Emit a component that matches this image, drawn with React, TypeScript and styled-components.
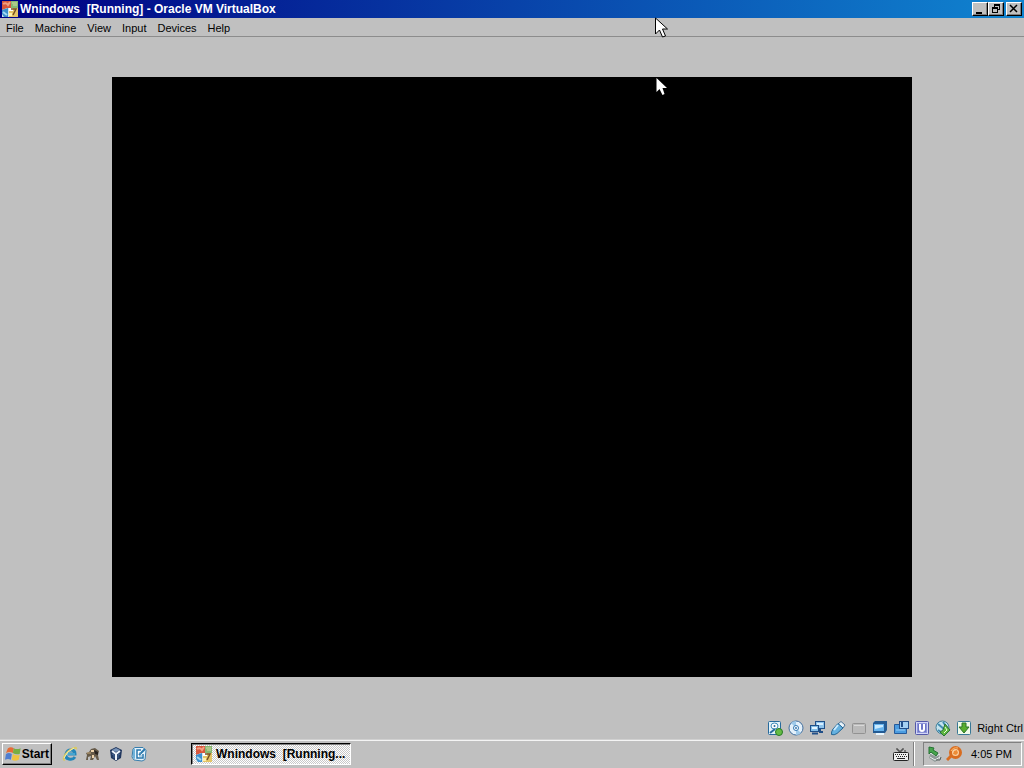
import React from "react";
import styled, { createGlobalStyle, css } from "styled-components";

const GlobalStyle = createGlobalStyle`
  * { box-sizing: border-box; }
  body { margin: 0; background: #c0c0c0; }
  button { font: inherit; color: inherit; border-radius: 0; margin: 0; }
`;

const raised = css`
  border: 1px solid;
  border-color: #fff #000 #000 #fff;
  box-shadow: inset -1px -1px 0 #808080;
  background: #c0c0c0;
`;

const Desktop = styled.div`
  display: flex;
  flex-direction: column;
  min-height: 100vh;
  position: relative;
  font-family: "Liberation Sans", Arial, sans-serif;
  font-size: 11px;
  line-height: 14px;
  color: #000;
  background: #c0c0c0;
`;

const TitleBar = styled.header`
  display: flex;
  align-items: center;
  height: 18px;
  padding: 0 2px;
  gap: 2px;
  background: linear-gradient(90deg, #000082, #1084d0);
`;

const Title = styled.h1`
  flex: 1;
  margin: 0;
  font-size: 12px;
  line-height: 16px;
  font-weight: bold;
  color: #fff;
  white-space: pre;
`;

const WindowControls = styled.div`
  display: flex;
`;

const ControlButton = styled.button<{ $spaced?: boolean }>`
  ${raised}
  display: flex;
  align-items: center;
  justify-content: center;
  width: 16px;
  height: 14px;
  padding: 0;
  margin-left: ${(p) => (p.$spaced ? "2px" : "0")};
`;

const MenuBar = styled.nav`
  display: flex;
  align-items: center;
  height: 19px;
  border-bottom: 1px solid #8c8c8c;
`;

const MenuItem = styled.button`
  border: 0;
  padding: 1px 5px 0 6px;
  line-height: 18px;
  background: none;
`;

const Workspace = styled.main`
  flex: 1;
  display: flex;
  padding: 40px 112px 39px;
`;

const GuestDisplay = styled.section`
  position: relative;
  flex: 1;
  background: #000;
`;

const Pointer = styled.svg<{ $left: string; $top: string }>`
  position: absolute;
  left: ${(p) => p.$left};
  top: ${(p) => p.$top};
`;

const StatusBar = styled.footer`
  display: flex;
  align-items: center;
  justify-content: flex-end;
  gap: 5px;
  height: 24px;
  padding-right: 1px;
`;

const Taskbar = styled.footer`
  display: flex;
  align-items: center;
  height: 28px;
  padding: 0 2px 2px;
  border-top: 1px solid #f4f4f4;
  box-shadow: 0 -1px 0 #d0d0d0;
`;

const StartButton = styled.button`
  ${raised}
  display: flex;
  align-items: center;
  gap: 1px;
  width: 50px;
  height: 22px;
  padding: 0 2px;
  font-size: 12px;
  font-weight: bold;
`;

const QuickLaunch = styled.div`
  display: flex;
  gap: 7px;
  margin-left: 10px;
  width: 129px;
`;

const IconButton = styled.button`
  display: flex;
  border: 0;
  padding: 0;
  background: none;
`;

const TaskButton = styled.button`
  display: flex;
  align-items: center;
  gap: 4px;
  width: 160px;
  height: 22px;
  padding: 1px 4px 0;
  border: 1px solid;
  border-color: #000 #fff #fff #000;
  box-shadow: inset 1px 1px 0 #808080;
  background: repeating-conic-gradient(#fff 0 25%, #c8c8c8 0 50%) 0 0 / 2px 2px;
  font-size: 12px;
  font-weight: bold;
  white-space: pre;
`;

const TrayGroup = styled.div`
  display: flex;
  align-items: center;
  margin-left: auto;
`;

const Divider = styled.div`
  width: 2px;
  height: 24px;
  margin: 0 8px 0 4px;
  border-left: 1px solid #808080;
  border-right: 1px solid #fff;
`;

const Tray = styled.div`
  display: flex;
  align-items: center;
  gap: 3px;
  width: 99px;
  height: 24px;
  padding: 0 3px;
  border: 1px solid;
  border-color: #808080 #fff #fff #808080;
`;

const Clock = styled.time`
  margin-left: 6px;
`;

const Icon = ({ children }: { children: React.ReactNode }) => (
  <svg width="16" height="16" viewBox="0 0 16 16" aria-hidden="true">
    {children}
  </svg>
);

const MachineIcon = () => (
  <Icon>
    <rect width="16" height="16" fill="#d9e6ea" />
    <path d="M0 0h9v7H5L0 9z" fill="#d9563c" />
    <path d="M1 3q3-2 5 1l2-3" stroke="#f2a084" strokeWidth="2" fill="none" />
    <path d="M9 0h7v7H9z" fill="#86b873" />
    <path d="M10 2h5M11 4h4" stroke="#d5d9a0" />
    <path d="M0 9l6-2v9H2L0 13z" fill="#3a8ece" />
    <path d="M1 11l4 3" stroke="#a5d9f1" strokeWidth="2" />
    <path d="M7 7h9v9H7z" fill="#e5c667" />
    <path d="M7 7h4v3H7z" fill="#fff" />
    <path d="M9 8h5l-3 6" stroke="#775025" strokeWidth="1.5" fill="none" />
    <path d="M7 12h3v3H7z" fill="#fff1ac" />
  </Icon>
);

const StartLogo = () => (
  <Icon>
    <path d="M3 2q3-2 6 0L8 7Q5 5 1 7z" fill="#e66b36" />
    <path d="M9 2q3 2 7 0l-1 6q-4 1-7-1z" fill="#76ae43" />
    <path d="M1 8q3-2 6 0l-1 6q-3-2-6 0z" fill="#507ed0" />
    <path d="M8 8q3 2 7 1l-1 5q-4 2-7 0z" fill="#eec33f" />
  </Icon>
);

const DiskIcon = () => (
  <Icon>
    <rect x="1.5" y="1.5" width="12" height="13" rx="1" fill="#e2f2fa" stroke="#276a9c" />
    <ellipse cx="7.5" cy="6" rx="3.5" ry="3" fill="#fff" stroke="#3e8dbb" />
    <circle cx="7.5" cy="6" r="1" fill="#276a9c" />
    <path d="M3 13l5-4" stroke="#276a9c" strokeWidth="2" />
    <circle cx="12" cy="12" r="3.5" fill="#65bb45" stroke="#267b24" />
  </Icon>
);

const DiscIcon = () => (
  <Icon>
    <circle cx="8" cy="8" r="7" fill="#e3f0fa" stroke="#426f9f" />
    <path d="M8 8L3 3q2-2 5-2zM8 8l5 5q-2 2-5 2z" fill="#9fcaea" />
    <circle cx="8" cy="8" r="2.5" fill="#fff" stroke="#3478b2" />
    <circle cx="8" cy="8" r="1" fill="#3478b2" />
  </Icon>
);

const NetworkIcon = () => (
  <Icon>
    <rect x="6.5" y="1.5" width="9" height="7" fill="#8fc4ec" stroke="#204f88" />
    <path d="M8 3h6v2H8z" fill="#d8efff" />
    <path d="M11 9v3h3" stroke="#204f88" strokeWidth="2" fill="none" />
    <rect x="1.5" y="5.5" width="8" height="6" fill="#82bde6" stroke="#204f88" />
    <path d="M3 7h5v2H3z" fill="#e5f5ff" />
    <path d="M3 13.5h6" stroke="#204f88" strokeWidth="2" />
  </Icon>
);

const UsbIcon = () => (
  <Icon>
    <path d="M11 1.500L15 5l-2 3-5-4z" fill="#eaf4fa" stroke="#4b7194" />
    <path d="M8 3.500L13 8l-6 5.500q-3 2-5.500 1Q1 12 3 9z" fill="#65b1e0" stroke="#246594" />
    <path d="M8 5l-4 5" stroke="#cdecff" strokeWidth="2" />
  </Icon>
);

const FolderIcon = () => (
  <Icon>
    <rect x="1.500" y="3.500" width="13" height="10" rx="1" fill="#bababa" stroke="#929292" />
    <path d="M3 5.500h10" stroke="#d8d8d8" />
  </Icon>
);

const DisplayIcon = () => (
  <Icon>
    <path d="M1 3l2-2h12v9l-2 3H1z" fill="#245b94" />
    <rect x="2" y="4" width="10" height="7" fill="#67b4ee" />
    <path d="M3 5h8v2L3 9z" fill="#c9eaff" />
    <path d="M4 14h8" stroke="#e8f6ff" strokeWidth="2" />
  </Icon>
);

const RecordingIcon = () => (
  <Icon>
    <path d="M1.500 4.500h5v3h7v6h-12z" fill="#4b9ce0" stroke="#255a9b" />
    <rect x="6.500" y="1.500" width="9" height="7" fill="#a5d1f3" stroke="#234f8a" />
    <path d="M9 2v5" stroke="#234f8a" strokeWidth="2" />
    <path d="M3 10h9" stroke="#9bd0f8" />
  </Icon>
);

const CpuIcon = () => (
  <Icon>
    <rect x="1.500" y="1.500" width="13" height="13" rx="1" fill="#d2d6f5" stroke="#5358a8" />
    <rect x="3.500" y="3.500" width="9" height="9" fill="#6c75c8" stroke="#8d93d9" />
    <path d="M6 4v5q0 2 2 2t2-2V4" stroke="#fff" strokeWidth="2" fill="none" />
  </Icon>
);

const MouseIcon = () => (
  <Icon>
    <circle cx="7.500" cy="7.500" r="6.500" fill="#c5e3ee" stroke="#44839c" />
    <path d="M3 4l6 5M8 2l5 7M3 10l6 4" stroke="#418cb0" strokeWidth="2" />
    <path d="M10 4l5 6-6 6-4-4 3-2z" fill="#5fb53e" stroke="#287336" />
    <path d="M10 7l2 3-3 3" stroke="#e9ffe0" fill="none" />
  </Icon>
);

const CaptureIcon = () => (
  <Icon>
    <rect x="1.500" y="1.500" width="13" height="13" rx="1" fill="#f1fae9" stroke="#397896" />
    <path d="M6 3h4v4h3l-5 6-5-6h3z" fill="#58ad2e" stroke="#2c7428" />
  </Icon>
);

const BrowserIcon = () => (
  <Icon>
    <path d="M13 11q-2 3-6 2-4-1-3-5 1-4 5-4 4 0 4 4H6" fill="none" stroke="#2386ba" strokeWidth="3" />
    <path d="M5 8h8" stroke="#6ac5e8" />
    <path d="M3 15q-3 0-2-4Q4 4 12 1q4-1 3 3-1-2-4-1-6 3-8 8-1 2 0 4z" fill="#d9c964" />
    <path d="M2 12Q5 5 12 2" stroke="#f6f0b2" fill="none" />
  </Icon>
);

const DogIcon = () => (
  <Icon>
    <path d="M1 7l3-1 2-3 4-1 4 3-1 4 1 5h-2l-2-4-2 4H5l1-4-3 1v3H1l1-5z" fill="#665a48" />
    <path d="M6 4h3v2H6zM7 9h2v3H7z" fill="#eed3ab" />
    <path d="M9 4l4 2v3l-3-1z" fill="#292420" />
    <path d="M2 7h4" stroke="#c5a87b" />
  </Icon>
);

const VirtualBoxIcon = () => (
  <Icon>
    <path d="M8 1l6 3-1 8-5 3-5-3-1-8z" fill="#22385f" />
    <path d="M8 2l4 2-4 2-4-2z" fill="#7994b9" />
    <path d="M4 5l4 3 4-3M8 8v6" stroke="#eef4fb" strokeWidth="2" fill="none" />
    <path d="M4 8l2 1v3M12 8l-2 1v3" stroke="#496b99" fill="none" />
  </Icon>
);

const MailIcon = () => (
  <Icon>
    <path d="M4 1.500h8l3 3-1 9-3 1.500-8-1-2-3 1-8z" fill="#e4f2fb" stroke="#377dac" />
    <path d="M2 3h2v10l-2-1z" fill="#6fb3d9" />
    <path d="M10 4H6v8h6V8" fill="#fff" stroke="#2878ad" strokeWidth="1.500" />
    <path d="M8 9l6-6" stroke="#2878ad" strokeWidth="2" />
    <path d="M8 7h2M8 10h3" stroke="#65a5cc" />
  </Icon>
);

const KeyboardIcon = () => (
  <Icon>
    <path d="M4 2v2h2v2h2V4h2V2m2 2v2" stroke="#333" fill="none" />
    <rect x=".5" y="6.500" width="15" height="8" rx="1" fill="#eee" stroke="#222" />
    <path d="M2 8.500h12M3 10.500h11" stroke="#222" strokeDasharray="1 1" />
    <path d="M4 12.500h8" stroke="#222" />
  </Icon>
);

const SafelyRemoveIcon = () => (
  <Icon>
    <path d="M4 5l8 4v4l-4 3-6-4z" fill="#909a98" />
    <path d="M3 7l6 3 4-2M3 11l5 3 5-3" stroke="#e8eeee" fill="none" />
    <path d="M2 1l5 1-1 2 5 3-2 3-5-4-2 2z" fill="#47a54c" stroke="#267334" />
    <path d="M9 14h4l1-3" stroke="#565f5d" fill="none" />
  </Icon>
);

const SearchKeyIcon = () => (
  <Icon>
    <path d="M6 9l-5 5" stroke="#d86c20" strokeWidth="3" />
    <circle cx="9.500" cy="6.500" r="5" fill="#f9d1a2" stroke="#d86c20" strokeWidth="3" />
    <path d="M7 8l1-3 3-1 1 3-2 2z" fill="#ed8b36" />
    <path d="M5 5q2-4 7-3" stroke="#ffbd70" fill="none" />
  </Icon>
);

const Cursor = ({ left, top, outlined }: { left: string; top: string; outlined?: boolean }) => (
  <Pointer $left={left} $top={top} width="13" height="21" viewBox="0 0 13 21" aria-hidden="true">
    <path
      d={
        outlined
          ? "M.5 1v16l4-4 3 7 3-1-3-7h5z"
          : "M.5 1v14l3-3 3 6 2-1-2-6h4.500z"
      }
      fill="#fff"
      stroke={outlined ? "#000" : "none"}
    />
  </Pointer>
);

const menus = ["File", "Machine", "View", "Input", "Devices", "Help"];

const indicators = [
  DiskIcon, DiscIcon, NetworkIcon, UsbIcon, FolderIcon,
  DisplayIcon, RecordingIcon, CpuIcon, MouseIcon, CaptureIcon,
];

const shortcuts = [
  { label: "Internet Explorer", Glyph: BrowserIcon },
  { label: "Desktop companion", Glyph: DogIcon },
  { label: "VirtualBox", Glyph: VirtualBoxIcon },
  { label: "Outlook Express", Glyph: MailIcon },
];

export default function App() {
  return (
    <Desktop>
      <GlobalStyle />
      <TitleBar>
        <MachineIcon />
        <Title>{"Wnindows  [Running] - Oracle VM VirtualBox"}</Title>
        <WindowControls>
          <ControlButton aria-label="Minimize">
            <svg width="10" height="10"><path d="M1 8h6v2H1z" /></svg>
          </ControlButton>
          <ControlButton aria-label="Restore">
            <svg width="10" height="10">
              <path d="M3 0h6v6H7V5h1V2H4v1H3zM1 3h6v6H1zM2 5v3h4V5z" fillRule="evenodd" />
            </svg>
          </ControlButton>
          <ControlButton aria-label="Close" $spaced>
            <svg width="10" height="10">
              <path d="M1 1l7 7M8 1L1 8" stroke="#000" strokeWidth="1.500" />
            </svg>
          </ControlButton>
        </WindowControls>
      </TitleBar>
      <MenuBar>
        {menus.map((name) => <MenuItem key={name}>{name}</MenuItem>)}
      </MenuBar>
      <Workspace>
        <GuestDisplay aria-label="Guest display">
          <Cursor left="68%" top="0" />
        </GuestDisplay>
      </Workspace>
      <StatusBar>
        {indicators.map((Glyph, i) => <Glyph key={i} />)}
        <span>Right Ctrl</span>
      </StatusBar>
      <Taskbar>
        <StartButton><StartLogo />Start</StartButton>
        <QuickLaunch>
          {shortcuts.map(({ label, Glyph }) => (
            <IconButton key={label} aria-label={label}><Glyph /></IconButton>
          ))}
        </QuickLaunch>
        <TaskButton><MachineIcon />{"Wnindows  [Running..."}</TaskButton>
        <TrayGroup>
          <KeyboardIcon />
          <Divider />
          <Tray>
            <SafelyRemoveIcon />
            <SearchKeyIcon />
            <Clock>4:05 PM</Clock>
          </Tray>
        </TrayGroup>
      </Taskbar>
      <Cursor left="64%" top="17px" outlined />
    </Desktop>
  );
}
